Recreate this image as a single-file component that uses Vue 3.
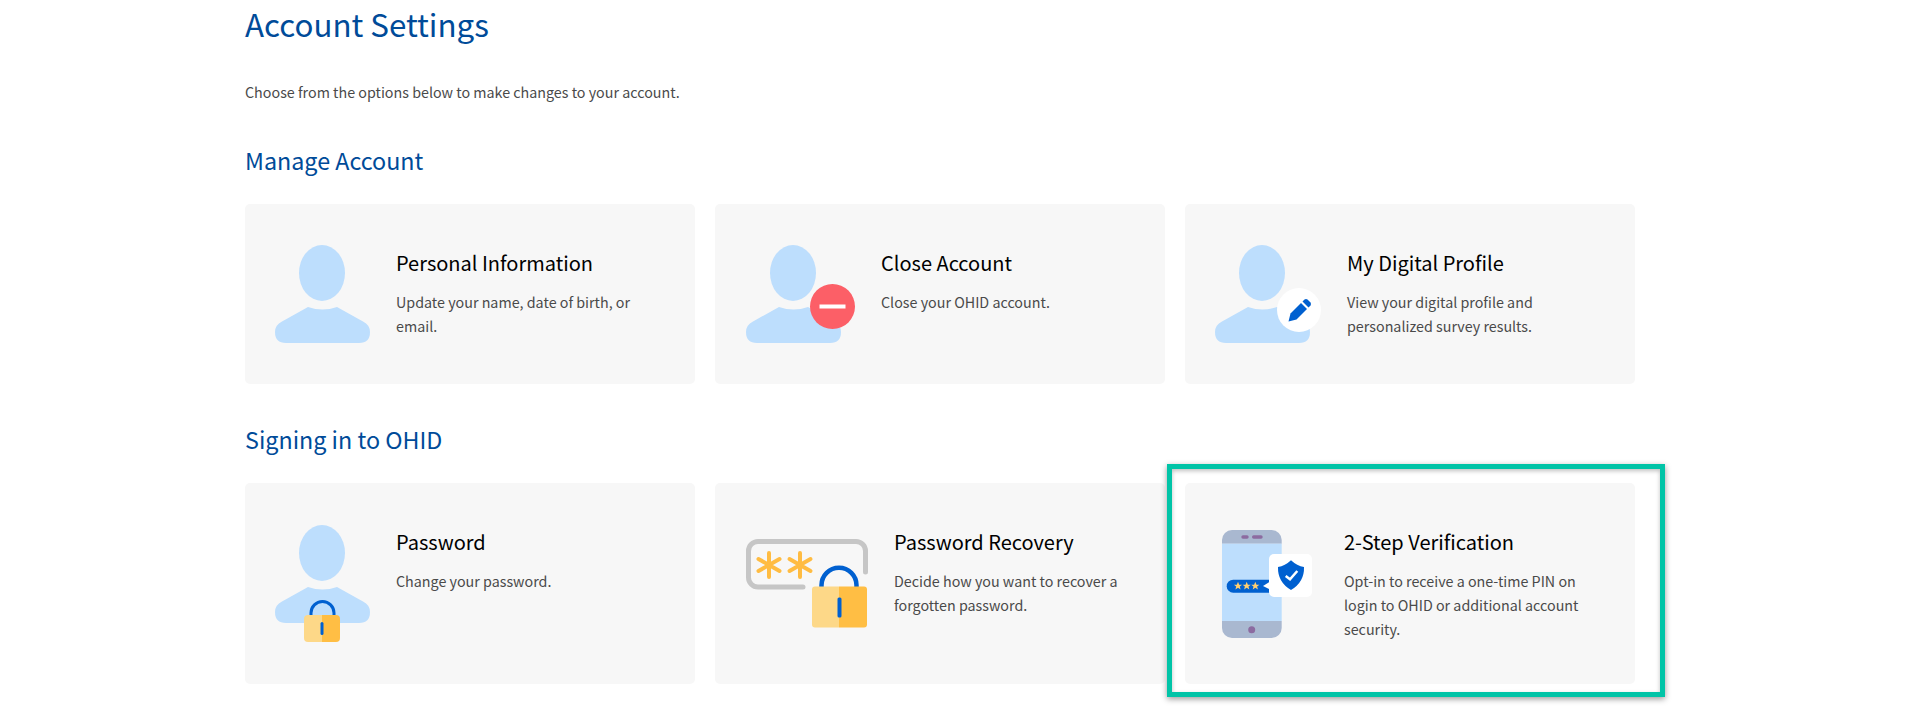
<script setup>
const personBody = 'M33 62Q47.5 67 62 62L88 76.5Q95 80 95 87Q95 98 84 98L11 98Q0 98 0 87Q0 80 7 76.5Z'
const star = 'M0-4.2L1.2-1.3L4.1-1.3L1.8.6L2.6 3.5L0 1.8L-2.6 3.5L-1.8.6L-4.1-1.3L-1.2-1.3Z'

const manageCards = [
  { title: 'Personal Information', text: 'Update your name, date of birth, or email.', icon: 'person' },
  { title: 'Close Account', text: 'Close your OHID account.', icon: 'close' },
  { title: 'My Digital Profile', text: 'View your digital profile and personalized survey results.', icon: 'edit' }
]

const signInCards = [
  { title: 'Password', text: 'Change your password.', icon: 'lock' },
  { title: 'Password Recovery', text: 'Decide how you want to recover a forgotten password.', icon: 'recovery' },
  { title: '2-Step Verification', text: 'Opt-in to receive a one-time PIN on login to OHID or additional account security.', icon: 'phone', marked: true }
]

const sections = [
  { heading: 'Manage Account', cards: manageCards },
  { heading: 'Signing in to OHID', cards: signInCards }
]
</script>

<template>
  <main class="page">
    <h1>Account Settings</h1>
    <p class="intro">Choose from the options below to make changes to your account.</p>

    <section v-for="section in sections" :key="section.heading" class="section">
      <h2>{{ section.heading }}</h2>
      <div class="grid">
        <div v-for="card in section.cards" :key="card.title" class="card">
          <svg v-if="card.icon === 'person'" width="95" height="98" viewBox="0 0 95 98">
            <ellipse cx="47" cy="28" rx="23" ry="28" fill="#bddefd" />
            <path :d="personBody" fill="#bddefd" />
          </svg>

          <svg v-else-if="card.icon === 'close'" width="109" height="98" viewBox="0 0 109 98">
            <ellipse cx="47" cy="28" rx="23" ry="28" fill="#bddefd" />
            <path :d="personBody" fill="#bddefd" />
            <circle cx="86.5" cy="61.5" r="22.5" fill="#fc5f67" />
            <rect x="73.5" y="59.5" width="26" height="4" fill="#fff" />
          </svg>

          <svg v-else-if="card.icon === 'edit'" width="106" height="98" viewBox="0 0 106 98">
            <ellipse cx="47" cy="28" rx="23" ry="28" fill="#bddefd" />
            <path :d="personBody" fill="#bddefd" />
            <circle cx="84" cy="65" r="22" fill="#fff" />
            <path d="M73.5 76.5L75.5 68.5L86 58L92 64L81.5 74.5Z" fill="#0060d0" />
            <path d="M87.5 56.5L89.5 54.5Q91 53.5 92.5 54.5L95.5 57.5Q96.5 59 95.5 60.5L93.5 62.5Z" fill="#0060d0" />
          </svg>

          <svg v-else-if="card.icon === 'lock'" width="95" height="117" viewBox="0 0 95 117">
            <ellipse cx="47" cy="28" rx="23" ry="28" fill="#bddefd" />
            <path :d="personBody" fill="#bddefd" />
            <path d="M36 91V88A11.5 11.5 0 0 1 59 88V91" fill="none" stroke="#0060d0" stroke-width="3" />
            <path d="M47 90H33Q29 90 29 94V113Q29 117 33 117H47Z" fill="#fdd888" />
            <path d="M47 90H61Q65 90 65 94V113Q65 117 61 117H47Z" fill="#ffbe44" />
            <rect x="45.5" y="97" width="3" height="13" rx="1.5" fill="#0060d0" />
          </svg>

          <svg v-else-if="card.icon === 'recovery'" width="122" height="89" viewBox="0 0 122 89">
            <path d="M119.5 33V12A9.5 9.5 0 0 0 110 2.5H12A9.5 9.5 0 0 0 2.5 12V38.5A9.5 9.5 0 0 0 12 48H57" fill="none" stroke="#c6c6c6" stroke-width="5" stroke-linecap="round" />
            <g stroke="#ffbc42" stroke-width="4" stroke-linecap="round">
              <path d="M23 14V38M12.5 20L33.5 32M33.5 20L12.5 32" />
              <path d="M54 14V38M43.5 20L64.5 32M64.5 20L43.5 32" />
            </g>
            <path d="M75.5 48V46.3A17.5 17.5 0 0 1 110.5 46.3V48" fill="none" stroke="#0060d0" stroke-width="4.5" />
            <path d="M93 47.5H69Q66 47.5 66 50.5V85.5Q66 88.5 69 88.5H93Z" fill="#fdd888" />
            <path d="M93 47.5H118Q121 47.5 121 50.5V85.5Q121 88.5 118 88.5H93Z" fill="#ffbe44" />
            <rect x="91.5" y="58.5" width="4" height="20" rx="1.5" fill="#0060d0" />
          </svg>

          <svg v-else width="103" height="108" viewBox="0 0 103 108">
            <path d="M7 13.7V10A10 10 0 0 1 17 0H56.7A10 10 0 0 1 66.7 10V13.7Z" fill="#a9b8d0" />
            <rect x="7" y="13.7" width="59.7" height="77.3" fill="#bddefd" />
            <path d="M7 91H66.7V98A10 10 0 0 1 56.7 108H17A10 10 0 0 1 7 98Z" fill="#a9b8d0" />
            <rect x="26.3" y="5.3" width="7.4" height="3.4" rx="1.7" fill="#8c6ba0" />
            <rect x="37" y="5.3" width="10.7" height="3.4" rx="1.7" fill="#8c6ba0" />
            <circle cx="36.7" cy="99.7" r="3.5" fill="#8c6ba0" />
            <rect x="11.7" y="49.7" width="50" height="13" rx="6.5" fill="#0060d0" />
            <path :d="star" transform="translate(23 56)" fill="#ffcf70" />
            <path :d="star" transform="translate(31.7 56)" fill="#ffcf70" />
            <path :d="star" transform="translate(40.3 56)" fill="#ffcf70" />
            <path d="M48 56L56 51L56 60Z" fill="#fff" />
            <rect x="54" y="24" width="43" height="43" rx="5" fill="#fff" />
            <path d="M76 30.3Q82 36 89 37Q89.5 52 76 60Q62.5 52 63 37Q70 36 76 30.3Z" fill="#0060d0" />
            <path d="M70.7 46L75 49.3L82.3 41" fill="none" stroke="#fff" stroke-width="2.5" />
          </svg>

          <div class="card-text">
            <h3>{{ card.title }}</h3>
            <p>{{ card.text }}</p>
          </div>

          <div v-if="card.marked" class="marker"></div>
        </div>
      </div>
    </section>
  </main>
</template>

<style>
html, body {
  background: #fff;
  overflow: hidden;
}
</style>

<style scoped>
.page {
  font-family: "Noto Sans CJK SC", "Noto Sans", sans-serif;
  padding-left: 245px;
  height: 708px;
  overflow: hidden;
  box-sizing: border-box;
}

h1 {
  margin: 0;
  font-size: 31.3px;
  font-weight: 400;
  line-height: 48px;
  color: #004b99;
}

.intro {
  margin: 32px 0 0;
  font-size: 14.3px;
  line-height: 24px;
  color: #4a4a4a;
}

.section {
  margin-top: 38px;
}

.section + .section {
  margin-top: 37px;
}

h2 {
  margin: 0 0 26px;
  font-size: 23.3px;
  font-weight: 400;
  line-height: 36px;
  color: #004b99;
}

.grid {
  display: grid;
  grid-template-columns: repeat(3, 450px);
  column-gap: 20px;
}

.card {
  position: relative;
  display: flex;
  align-items: center;
  gap: 26px;
  min-height: 180px;
  padding: 0 40px 0 30px;
  box-sizing: border-box;
  background: #f7f7f7;
  border-radius: 5px;
}

.card:nth-child(2) {
  padding-left: 31px;
}

.card svg {
  flex: none;
}

.card-text {
  align-self: flex-start;
  padding: 45px 0 43px;
}

h3 {
  margin: 0 0 13px;
  font-size: 20px;
  font-weight: 400;
  line-height: 28px;
  color: #000;
}

.card-text p {
  margin: 0;
  font-size: 14.3px;
  line-height: 24px;
  color: #4a4a4a;
}

.marker {
  position: absolute;
  top: -19px;
  right: -30px;
  bottom: -13px;
  left: -18px;
  border: 5px solid #00c4a7;
  box-shadow: 0 2px 6px rgba(0, 0, 0, 0.4), inset 0 2px 4px rgba(0, 0, 0, 0.25);
  pointer-events: none;
}
</style>
